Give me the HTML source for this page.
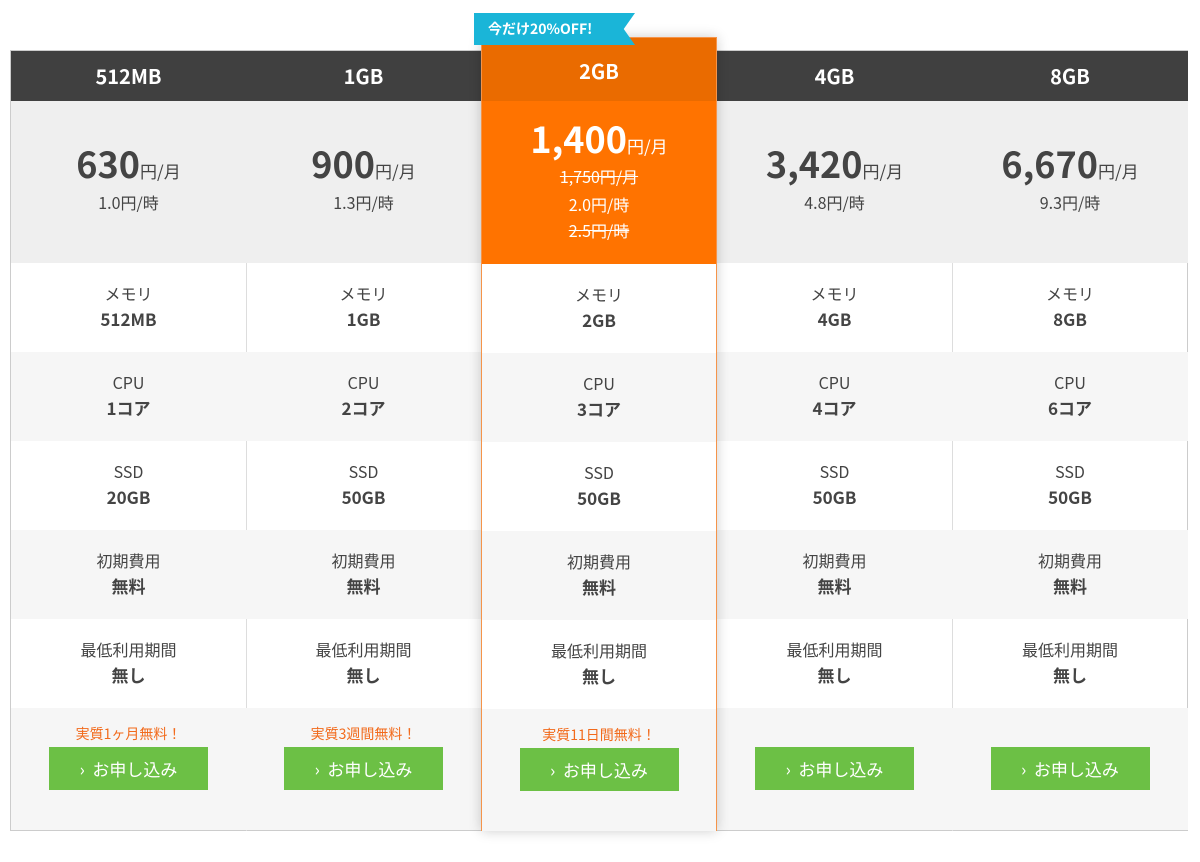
<!DOCTYPE html>
<html><head><meta charset="utf-8"><style>
*{margin:0;padding:0;box-sizing:border-box}
body{width:1200px;height:862px;background:#fff;font-family:"Noto Sans CJK JP","Liberation Sans",sans-serif;color:#444;position:relative;overflow:hidden}
.tbl{position:absolute;left:10px;top:50px;width:1178px;height:781px;border:1px solid #ccc;background:#fff}
.col{position:absolute;top:0;width:236px;height:780px;border-right:1px solid #ddd}
.hd{height:50px;background:#404040;color:#fff;font-weight:bold;font-size:20px;text-align:center;line-height:50px}
.pr{height:162px;background:#efefef;text-align:center;padding-top:42px}
.big{font-size:36px;font-weight:bold;color:#444;line-height:40px}
.big small{font-size:17px;font-weight:normal}
.hr{font-size:16px;line-height:22px;margin-top:0}
.row{height:89px;text-align:center;padding-top:17px;font-size:16px;line-height:26px}
.row b{font-size:17px;display:block}
.g{background:#f6f6f6}
.last{height:122px;background:#f6f6f6;text-align:center;padding-top:14px}
.promo{color:#f26a1b;font-size:14px;height:25px;line-height:25px}
.btn{display:block;margin:0 auto;width:159px;height:43px;background:#6cc045;color:#fff;font-size:17px;line-height:43px;text-align:center}
.hi{position:absolute;left:481px;top:37px;width:236px;height:794px;border:1px solid #f5944a;background:#fff;box-shadow:0 0 12px rgba(0,0,0,.2)}
.hi .hd{background:#ea6b00;height:63px;line-height:66px}
.hi .pr{background:#ff7300;color:#fff;padding-top:17px;height:163px}
.hi .big{color:#fff}
.hi .hr{color:#fff;line-height:28px;margin-top:0}
.s{text-decoration:line-through}
.tag{position:absolute;left:474px;top:13px;height:32px;width:161px;background:#1ab5d8;color:#fff;font-weight:bold;font-size:14px;line-height:32px;padding-left:14px;clip-path:polygon(0 0,100% 0,93% 50%,100% 100%,0 100%)}
</style></head><body>
<div class="tbl">
<div class="col" style="left:0">
<div class="hd">512MB</div><div class="pr"><div class="big">630<small>円/月</small></div><div class="hr">1.0円/時</div></div>
<div class="row">メモリ<b>512MB</b></div><div class="row g">CPU<b>1コア</b></div><div class="row">SSD<b>20GB</b></div><div class="row g">初期費用<b>無料</b></div><div class="row">最低利用期間<b>無し</b></div>
<div class="last"><div class="promo">実質1ヶ月無料！</div><span class="btn">›&nbsp; お申し込み</span></div></div>
<div class="col" style="left:235px">
<div class="hd">1GB</div><div class="pr"><div class="big">900<small>円/月</small></div><div class="hr">1.3円/時</div></div>
<div class="row">メモリ<b>1GB</b></div><div class="row g">CPU<b>2コア</b></div><div class="row">SSD<b>50GB</b></div><div class="row g">初期費用<b>無料</b></div><div class="row">最低利用期間<b>無し</b></div>
<div class="last"><div class="promo">実質3週間無料！</div><span class="btn">›&nbsp; お申し込み</span></div></div>
<div class="col" style="left:706px">
<div class="hd">4GB</div><div class="pr"><div class="big">3,420<small>円/月</small></div><div class="hr">4.8円/時</div></div>
<div class="row">メモリ<b>4GB</b></div><div class="row g">CPU<b>4コア</b></div><div class="row">SSD<b>50GB</b></div><div class="row g">初期費用<b>無料</b></div><div class="row">最低利用期間<b>無し</b></div>
<div class="last"><div class="promo"></div><span class="btn">›&nbsp; お申し込み</span></div></div>
<div class="col" style="left:941px;border-right:none">
<div class="hd">8GB</div><div class="pr"><div class="big">6,670<small>円/月</small></div><div class="hr">9.3円/時</div></div>
<div class="row">メモリ<b>8GB</b></div><div class="row g">CPU<b>6コア</b></div><div class="row">SSD<b>50GB</b></div><div class="row g">初期費用<b>無料</b></div><div class="row">最低利用期間<b>無し</b></div>
<div class="last"><div class="promo"></div><span class="btn">›&nbsp; お申し込み</span></div></div>
</div>
<div class="hi">
<div class="hd">2GB</div><div class="pr"><div class="big">1,400<small>円/月</small></div><div class="hr s" style="margin-top:-4px">1,750円/月</div><div class="hr">2.0円/時</div><div class="hr s" style="margin-top:-2px">2.5円/時</div></div>
<div class="row">メモリ<b>2GB</b></div><div class="row g">CPU<b>3コア</b></div><div class="row">SSD<b>50GB</b></div><div class="row g">初期費用<b>無料</b></div><div class="row">最低利用期間<b>無し</b></div>
<div class="last"><div class="promo">実質11日間無料！</div><span class="btn">›&nbsp; お申し込み</span></div></div>
<div class="tag">今だけ20%OFF!</div>
</body></html>
